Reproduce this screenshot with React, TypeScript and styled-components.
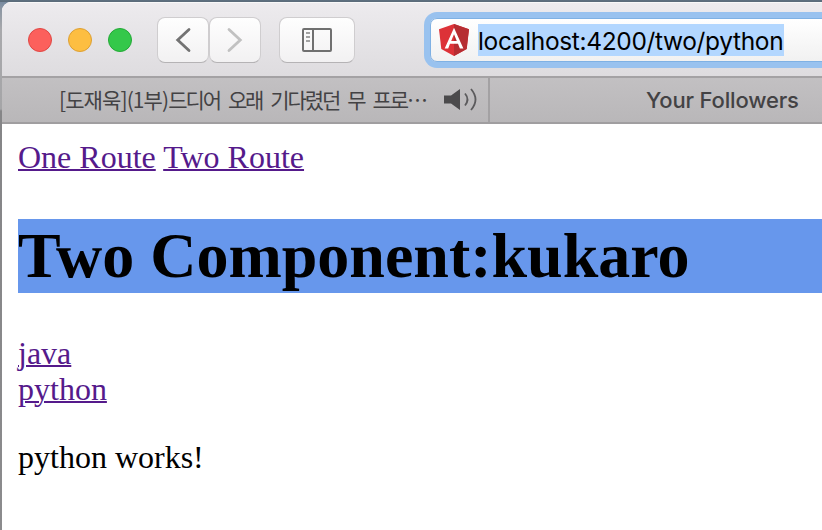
import React from "react";
import styled, { createGlobalStyle } from "styled-components";

const GlobalStyle = createGlobalStyle`
  * { box-sizing: border-box; }
  html, body { margin: 0; height: 100%; overflow: hidden; background: #fff; }
`;

const Desktop = styled.div`
  width: 822px;
  height: 530px;
  padding: 2px 0 0 2px;
  overflow: hidden;
  background:
    linear-gradient(#5d7080, #5b6a78) 0 0 / 100% 2px no-repeat,
    linear-gradient(#7388a0 0, #8d97a3 10px, #a9a9ac 30px, #a5a5a7 109px, #858587 111px, #8b8b8d 100%) 0 0 / 12px 100% no-repeat,
    #607080;
`;

const BrowserWindow = styled.div`
  display: flex;
  flex-direction: column;
  width: 820px;
  height: 528px;
  overflow: hidden;
  border-top-left-radius: 9px;
  background: #fff;
`;

const Toolbar = styled.header`
  display: flex;
  align-items: center;
  flex: none;
  height: 76px;
  padding-left: 26px;
  border-bottom: 2px solid #a4a2a4;
  box-shadow: inset 0 1px #f8f8f8;
  background: linear-gradient(#edebee, #dedcdf);
`;

const TrafficLights = styled.div`
  display: flex;
  gap: 16px;
  margin: 2px 25px 0 0;
`;

const Light = styled.span<{ $fill: string; $edge: string }>`
  width: 24px;
  height: 24px;
  border: 1px solid ${(p) => p.$edge};
  border-radius: 50%;
  background: ${(p) => p.$fill};
`;

const ButtonGroup = styled.div`
  display: flex;
  margin: 2px 18px 0 0;
`;

const ToolButton = styled.button<{ $width: number }>`
  display: flex;
  align-items: center;
  justify-content: center;
  width: ${(p) => p.$width}px;
  height: 46px;
  padding: 0;
  border: 1px solid #cfcdcf;
  border-bottom-color: #b5b3b5;
  border-radius: 8px;
  background: linear-gradient(#fefefe, #f2f1f2);
`;

const AddressBar = styled.div`
  display: flex;
  align-items: center;
  flex: none;
  width: 460px;
  height: 44px;
  margin: 2px 0 0 57px;
  padding-left: 8px;
  border: 1px solid #7fb1e4;
  border-radius: 7px;
  box-shadow: 0 0 0 6px #99c2ef;
  background: linear-gradient(#fff, #f1f1f1);
`;

const Url = styled.span`
  width: 306px;
  height: 32px;
  margin-left: 9px;
  padding-left: 0;
  background: #b3d7ff;
  color: #000;
  font: 400 24.5px/34px Inter, sans-serif;
  letter-spacing: -0.35px;
  white-space: nowrap;
`;

const TabBar = styled.nav`
  display: flex;
  flex: none;
  height: 46px;
  border-bottom: 2px solid #a09ea0;
  background: linear-gradient(#c2c0c2, #b9b7b9);
  color: #434244;
`;

const MediaTab = styled.div`
  display: flex;
  align-items: center;
  flex: none;
  width: 488px;
  padding-left: 57px;
  border-right: 2px solid #a3a1a3;
`;

const KoreanTitle = styled.span`
  flex: none;
  width: 385px;
  height: 44px;
  font: 400 21px/42px "Noto Sans CJK KR", sans-serif;
  letter-spacing: -2.1px;
  word-spacing: 5.4px;
  white-space: nowrap;
`;

const Bracketed = styled.span`
  letter-spacing: -0.9px;
`;

const PlainTab = styled.div`
  padding-left: 156px;
  font: 500 22px/45px Inter, sans-serif;
  letter-spacing: -0.15px;
  white-space: nowrap;
`;

const Page = styled.main`
  flex: 1;
  padding: 15px 0 0 16px;
  color: #000;
  font: 32px/36px "Liberation Serif", serif;
`;

const RouteLink = styled.a`
  color: #551a8b;
  text-decoration: underline;
  text-decoration-thickness: 2px;
`;

const Heading = styled.h1`
  margin: 44px 0 42px;
  background: #6797ec;
  font-size: 64px;
  line-height: 74px;
`;

const TopicLinks = styled.div`
  display: flex;
  flex-direction: column;
  align-items: flex-start;
`;

const Message = styled.p`
  margin: 32px 0 0;
`;

const Chevron = ({ forward = false }: { forward?: boolean }) => (
  <svg width="16" height="26" viewBox="0 0 16 26" fill="none"
    stroke={forward ? "#c1c1c1" : "#737373"} strokeWidth="2.8" strokeLinecap="round">
    <path d={forward ? "M2 2.4 13.3 13 2 23.6" : "M14 2.4 2.7 13 14 23.6"} />
  </svg>
);

const SidebarIcon = () => (
  <svg width="30" height="24" viewBox="0 0 30 24" fill="none">
    <rect x="1" y="1" width="28" height="22" rx="1" stroke="#707070" strokeWidth="2" />
    <path d="M11 1v22" stroke="#707070" strokeWidth="2" />
    <path d="M4 5h4M4 9h4M4 13h4" stroke="#a2a2a2" strokeWidth="2" />
  </svg>
);

const AngularIcon = () => (
  <svg width="30" height="32" viewBox="0 0 30 32">
    <path d="M15 0 30 5.2 27.7 25 15 32 2.3 25 0 5.2Z" fill="#dd3238" />
    <path d="M15 0 30 5.2 27.7 25 15 32Z" fill="#b62d32" />
    <path fillRule="evenodd" fill="#fff"
      d="M15 3.7 5.7 24.4h3.5L11 19.8h8l1.9 4.6h3.5ZM15 10.2l2.8 6.7h-5.6Z" />
  </svg>
);

const SpeakerIcon = () => (
  <svg width="33" height="24" viewBox="0 0 33 24" fill="none">
    <path d="M0 7.5h7L16 1v21L7 15.5H0Z" fill="#4b4a4c" />
    <path d="M21 5.5q5 6 0 12" stroke="#5c5b5d" strokeWidth="1.8" />
    <path d="M27 1q9 10.5 0 21" stroke="#5c5b5d" strokeWidth="1.8" />
  </svg>
);

export default function App() {
  return (
    <>
      <GlobalStyle />
      <Desktop>
        <BrowserWindow>
          <Toolbar>
            <TrafficLights>
              <Light $fill="#fc605c" $edge="#e04744" />
              <Light $fill="#fdbe41" $edge="#dda034" />
              <Light $fill="#34c84a" $edge="#23a936" />
            </TrafficLights>
            <ButtonGroup>
              <ToolButton $width={52} aria-label="Back"><Chevron /></ToolButton>
              <ToolButton $width={52} aria-label="Forward"><Chevron forward /></ToolButton>
            </ButtonGroup>
            <ButtonGroup>
              <ToolButton $width={76} aria-label="Sidebar"><SidebarIcon /></ToolButton>
            </ButtonGroup>
            <AddressBar>
              <AngularIcon />
              <Url>localhost:4200/two/python</Url>
            </AddressBar>
          </Toolbar>
          <TabBar>
            <MediaTab>
              <KoreanTitle>
                <Bracketed>[도재욱](1부)</Bracketed>드디어 오래 기다렸던 무 프로⋯
              </KoreanTitle>
              <SpeakerIcon />
            </MediaTab>
            <PlainTab>Your Followers</PlainTab>
          </TabBar>
          <Page>
            <RouteLink>One Route</RouteLink> <RouteLink>Two Route</RouteLink>
            <Heading>Two Component:kukaro</Heading>
            <TopicLinks>
              <RouteLink>java</RouteLink>
              <RouteLink>python</RouteLink>
            </TopicLinks>
            <Message>python works!</Message>
          </Page>
        </BrowserWindow>
      </Desktop>
    </>
  );
}
